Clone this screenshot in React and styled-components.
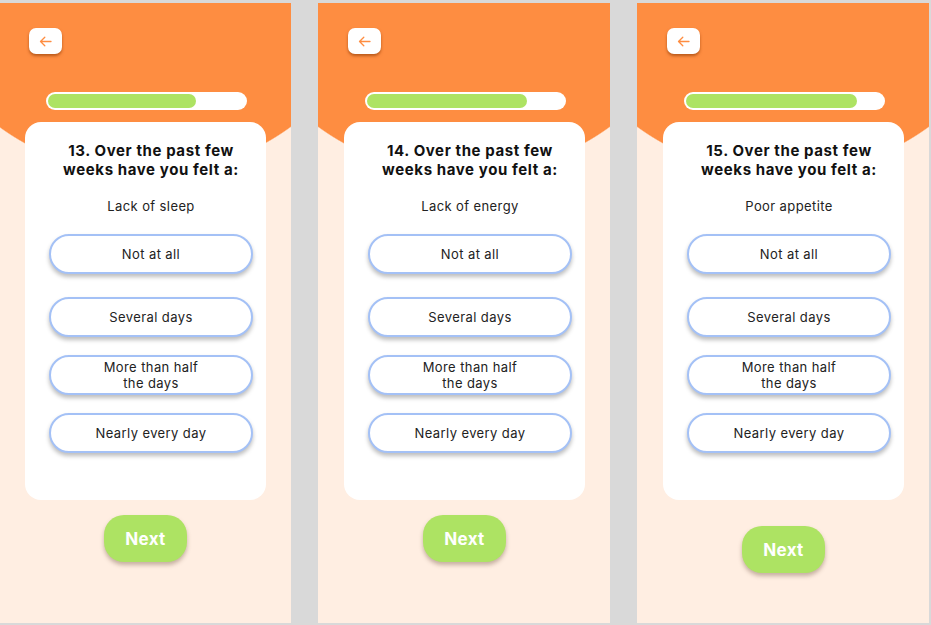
import React from "react";
import styled, { createGlobalStyle } from "styled-components";

const GlobalStyle = createGlobalStyle`
  html, body {
    margin: 0;
    padding: 0;
    background: #d9d9d9;
  }
  body {
    font-family: Inter, "Open Sans", Arial, sans-serif;
    color: #1e1e1e;
  }
`;

const Page = styled.div`
  display: flex;
  gap: 27px;
  width: 931px;
  height: 625px;
  padding-top: 3px;
  margin-left: -1px;
  box-sizing: border-box;
  overflow: hidden;
`;

const Screen = styled.section`
  flex: 0 0 292px;
  height: 620px;
  box-sizing: border-box;
  padding: 25px 25px 0 26px;
  display: flex;
  flex-direction: column;
  background: radial-gradient(
    circle 248px at 146px -76px,
    #fe8d41 99.5%,
    #ffeee2 100%
  );
`;

const BackButton = styled.button`
  align-self: flex-start;
  margin-left: 4px;
  width: 33px;
  height: 26px;
  border: none;
  border-radius: 7px;
  background: #fff;
  box-shadow: 0 2px 3px rgba(140, 55, 0, 0.6);
  display: flex;
  align-items: center;
  justify-content: center;
  padding: 0;
`;

const Progress = styled.div`
  margin: 38px 0 0 21px;
  width: 201px;
  height: 18px;
  border-radius: 9px;
  background: #fff;
  padding: 2px;
  box-sizing: border-box;
`;

const ProgressFill = styled.div`
  height: 14px;
  border-radius: 7px;
  background: #ade363;
`;

const Card = styled.div`
  margin-top: 12px;
  width: 241px;
  height: 378px;
  box-sizing: border-box;
  background: #fff;
  border-radius: 16px;
  padding: 19px 13px 0 24px;
  display: flex;
  flex-direction: column;
  align-items: center;
`;

const Title = styled.h2`
  margin: 0;
  font-size: 15px;
  line-height: 19px;
  font-weight: 700;
  letter-spacing: 0.6px;
  text-align: center;
  color: #111;
  white-space: nowrap;
`;

const Subtitle = styled.p`
  margin: 19px 0 0;
  font-size: 13px;
  line-height: 16px;
  letter-spacing: 0.4px;
  text-align: center;
  color: #222;
`;

const Options = styled.div`
  margin-top: 20px;
  display: flex;
  flex-direction: column;
  gap: 18px;
`;

const Option = styled.button`
  width: 204px;
  height: 40px;
  box-sizing: border-box;
  border: 2px solid #a4c1f6;
  border-radius: 20px;
  background: #fff;
  box-shadow: 0 3px 4px rgba(0, 0, 0, 0.26);
  font-family: inherit;
  font-size: 13px;
  line-height: 16px;
  letter-spacing: 0.4px;
  color: #222;
  text-align: center;
  padding: 0 20px;
  margin-bottom: ${(p) => (p.$first ? "5px" : "0")};
`;

const NextButton = styled.button`
  align-self: center;
  margin-top: ${(p) => p.$offset}px;
  width: 83px;
  height: 47px;
  border: none;
  border-radius: 20px;
  background: #ade363;
  color: #fff;
  font-family: inherit;
  font-size: 17px;
  font-weight: 700;
  letter-spacing: 0.3px;
  box-shadow: 0 3px 4px rgba(90, 60, 40, 0.35);
`;

const ArrowIcon = () => (
  <svg width="13" height="11" viewBox="0 0 13 11" fill="none">
    <path
      d="M12 5.5H1.5M5.8 1.2L1.5 5.5L5.8 9.8"
      stroke="#fe8d41"
      strokeWidth="1.3"
      strokeLinecap="round"
      strokeLinejoin="round"
    />
  </svg>
);

const screens = [
  { n: 13, topic: "Lack of sleep", progress: 148, next: 15 },
  { n: 14, topic: "Lack of energy", progress: 160, next: 15 },
  { n: 15, topic: "Poor appetite", progress: 171, next: 26 },
];

const answers = [
  "Not at all",
  "Several days",
  ["More than half", "the days"],
  "Nearly every day",
];

export default function App() {
  return (
    <>
      <GlobalStyle />
      <Page>
        {screens.map((s) => (
          <Screen key={s.n}>
            <BackButton aria-label="Back">
              <ArrowIcon />
            </BackButton>
            <Progress>
              <ProgressFill style={{ width: s.progress }} />
            </Progress>
            <Card>
              <Title>
                {s.n}. Over the past few
                <br />
                weeks have you felt a:
              </Title>
              <Subtitle>{s.topic}</Subtitle>
              <Options>
                {answers.map((a, i) => (
                  <Option key={i} $first={i === 0}>
                    {Array.isArray(a) ? (
                      <>
                        {a[0]}
                        <br />
                        {a[1]}
                      </>
                    ) : (
                      a
                    )}
                  </Option>
                ))}
              </Options>
            </Card>
            <NextButton $offset={s.next}>Next</NextButton>
          </Screen>
        ))}
      </Page>
    </>
  );
}
